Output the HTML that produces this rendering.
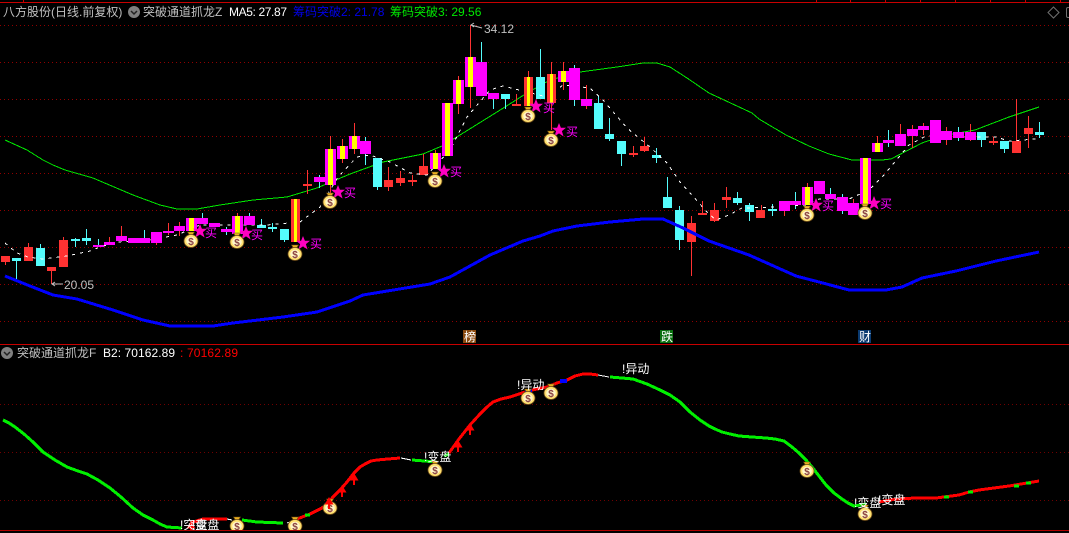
<!DOCTYPE html>
<html><head><meta charset="utf-8"><style>
html,body{margin:0;padding:0;background:#000;width:1069px;height:533px;overflow:hidden}
svg{display:block}
text{font-family:"Liberation Sans","WenQuanYi Zen Hei","Noto Sans CJK SC",sans-serif;font-size:12px}
.c{shape-rendering:crispEdges}
</style></head><body>
<svg width="1069" height="533" viewBox="0 0 1069 533" xmlns="http://www.w3.org/2000/svg">
<defs>
<g id="bag">
<path d="M-3.5-8H3.5L1.5-5H-1.5Z" fill="#eab020" stroke="#6a4a10" stroke-width=".6"/>
<ellipse cx="0" cy="1" rx="7" ry="6.5" fill="#ffe070" stroke="#6b4a18" stroke-width=".8"/>
<ellipse cx="0" cy="1" rx="4.8" ry="4.3" fill="#fff6c8"/>
<text x="0" y="5" text-anchor="middle" style="font-size:10px;font-weight:bold" fill="#8a4040">$</text>
</g>
<clipPath id="low"><rect x="0" y="345" width="1069" height="185"/></clipPath>
<polygon id="star" points="0,-7 1.9,-2.3 7,-2.3 2.9,1.1 4.6,6.5 0,3.4 -4.6,6.5 -2.9,1.1 -7,-2.3 -1.9,-2.3" fill="#ff00c0"/>
<g id="up"><path d="M0-6L4.5 1.5H1V6H-1V1.5H-4.5Z" fill="#f00"/></g>
</defs>
<rect width="1069" height="533" fill="#000"/>
<g class="c">
<path d="M0 25.5H1069M0 62.5H1069M0 99.5H1069M0 136.5H1069M0 173.5H1069M0 210.5H1069M0 247.5H1069M0 284.5H1069M0 321.5H1069" stroke="#900000" stroke-width="1" stroke-dasharray="1 3" fill="none"/>
<path d="M0 404.5H1069M0 452.5H1069M0 500.5H1069" stroke="#700000" stroke-width="1" stroke-dasharray="1 3" fill="none"/>
<path d="M0 2.5H1069M0 344.5H1069" stroke="#c80000" fill="none"/>
<path d="M0 530.5H1069" stroke="#b00000" fill="none"/>
<path d="M23.5 0V2M816.5 0V2M850.5 0V2M885.5 0V2M920.5 0V2M955.5 0V2M990.5 0V2M1025.5 0V2M1060.5 0V2" stroke="#c80000" fill="none"/>
<!-- green MA -->
<polyline fill="none" stroke="#00e800" stroke-width="1" points="5,140 27,150 43,160 53,165 65,170 93,178 100,181 133,195 160,205 177,209 197,209 220,205 253,200 287,197 317,188 350,174 383,162 423,154 442,146 460,135 505,107 527,93 550,80 580,72 617,67 643,63 657,63 670,67 687,78 709,93 752,113 759,119 786,135 809,146 829,154 852,160 882,160 891,159 922,143 942,136 975,130 1009,117 1039,107"/>
<!-- wicks -->
<path fill="none" stroke="#ff3232" d="M5.5 256V265M28.5 243V247M51.5 271V284M63.5 237V240M109.5 237V242M121.5 226V236M168.5 223V235M179.5 222V236M307.5 170V194M330.5 136V194M342.5 139V163M354.5 123V154M388.5 167V191M400.5 171V186M412.5 175V186M423.5 154V175M435.5 150V153M458.5 76V114M470.5 25V108M516.5 94V105M528.5 71V77M551.5 62V130M563.5 62V90M586.5 85V109M633.5 146V157M644.5 137V152M691.5 216V276M702.5 201V215M714.5 203V222M726.5 187V208M761.5 205V210M784.5 211V216M807.5 183V187M853.5 199V203M877.5 136V143M900.5 124V134M912.5 125V148M923.5 123V135M946.5 127V145M970.5 124V141M993.5 137V145M1016.5 99V141M1028.5 116V148M156.5 243V245M237.5 213V216"/>
<path fill="none" stroke="#54fcfc" d="M16.5 258V279M40.5 244V248M75.5 238V247M86.5 229V245M98.5 239V247M144.5 230V238M202.5 213V218M226.5 227V235M249.5 213V216M261.5 219V228M272.5 223V232M284.5 240V242M319.5 175V188M365.5 137V165M377.5 187V190M481.5 42V62M493.5 99V109M505.5 99V109M540.5 49V77M574.5 65V106M598.5 96V103M609.5 118V141M621.5 154V166M656.5 148V163M667.5 177V197M679.5 206V250M737.5 192V205M749.5 203V221M772.5 204V216M795.5 192V209M830.5 188V194M842.5 194V214M888.5 130V147M958.5 127V141M981.5 140V147M1004.5 149V153M1039.5 122V138"/>
<!-- red bodies -->
<path fill="#ff3232" d="M1 256H10V262H1ZM24 247H33V261H24ZM47 267H56V271H47ZM59 240H68V267H59ZM303 184H312V186H303ZM384 180H393V187H384ZM396 178H405V183H396ZM408 180H417V182H408ZM419 166H428V175H419ZM512 104H521V106H512ZM629 153H638V155H629ZM640 146H649V151H640ZM687 223H696V242H687ZM698 213H707V215H698ZM710 210H719V221H710ZM722 197H731V200H722ZM756 210H765V218H756ZM989 141H998V143H989ZM1012 141H1021V153H1012ZM1024 128H1033V134H1024Z"/>
<!-- cyan bodies -->
<path fill="#54fcfc" d="M12 258H21V261H12ZM36 248H45V266H36ZM71 239H80V241H71ZM82 238H91V241H82ZM257 225H266V228H257ZM268 227H277V229H268ZM280 229H289V240H280ZM373 158H382V187H373ZM501 94H510V99H501ZM536 77H545V99H536ZM594 103H603V129H594ZM605 134H614V139H605ZM617 141H626V154H617ZM652 155H661V158H652ZM663 197H672V208H663ZM675 210H684V240H675ZM733 198H742V203H733ZM745 205H754V212H745ZM768 209H777V211H768ZM977 132H986V140H977ZM1000 141H1009V149H1000ZM1035 132H1044V135H1035Z"/>
<!-- blue -->
<polyline fill="none" stroke="#0000ff" stroke-width="3" points="5,276 30,286 53,295 77,299 113,310 143,320 170,326 213,326 233,323 283,317 317,312 350,301 363,295 430,284 450,277 490,255 523,241 540,236 553,231 577,226 610,222 643,219 663,219 683,228 709,241 749,255 796,276 819,282 849,290 886,290 902,287 922,278 956,271 996,261 1039,252"/>
<!-- white dashed -->
<polyline fill="none" stroke="#fff" stroke-width="1" stroke-dasharray="3 5" points="5,243 17,253 28,257 43,259 67,256 90,251 100,247 117,242 150,240 177,235 200,225 230,225 267,225 300,222 320,207 338,177 357,157 370,155 390,162 410,173 427,175 450,150 467,117 490,90 503,86 527,92 547,97 563,85 590,88 603,100 627,128 650,147 667,163 680,182 708,213 716,220 729,215 742,208 776,207 806,205 819,199 849,199 869,190 884,175 909,145 926,136 959,137 996,137 1009,141 1036,139"/>
<!-- magenta bodies -->
<path fill="#ff00ff" d="M93 245H104V247H93ZM104 242H115V245H104ZM116 236H127V241H116ZM128 238H139V243H128ZM139 238H150V243H139ZM151 232H162V243H151ZM163 231H174V233H163ZM174 226H185V231H174ZM186 218H197V231H186ZM197 218H208V224H197ZM209 223H220V227H209ZM221 229H232V232H221ZM232 216H243V234H232ZM244 216H255V225H244ZM314 177H325V182H314ZM325 149H336V185H325ZM337 146H348V159H337ZM349 136H360V149H349ZM360 141H371V154H360ZM430 153H441V169H430ZM442 103H453V156H442ZM453 80H464V104H453ZM465 57H476V87H465ZM476 62H487V96H476ZM488 93H499V99H488ZM558 71H569V82H558ZM569 68H580V100H569ZM581 99H592V106H581ZM779 201H790V211H779ZM790 201H801V205H790ZM802 187H813V205H802ZM814 181H825V194H814ZM825 194H836V199H825ZM837 197H848V211H837ZM848 203H859V215H848ZM860 158H871V204H860ZM872 143H883V152H872ZM883 140H894V143H883ZM895 134H906V146H895ZM907 129H918V136H907ZM918 126H929V130H918ZM930 120H941V143H930ZM941 131H952V140H941ZM953 132H964V138H953ZM965 132H976V140H965Z"/>
<!-- red/yellow/red -->
<path fill="#ff3232" d="M291 199H300V242H291ZM524 77H533V106H524ZM547 74H556V103H547Z"/>
<path fill="#ffff00" d="M294 199H297V242H294ZM527 77H530V106H527ZM550 74H553V103H550ZM189 218H194V231H189ZM235 216H240V234H235ZM328 149H333V185H328ZM340 146H345V159H340ZM352 136H357V149H352ZM433 153H438V169H433ZM445 103H450V156H445ZM456 80H461V104H456ZM468 57H473V87H468ZM561 71H566V82H561ZM805 187H810V205H805ZM863 158H868V204H863ZM875 143H880V152H875Z"/>
</g>
<!-- stars and 买 -->
<g fill="#ff00ff">
<use href="#star" x="200" y="231"/><text x="205" y="237">买</text>
<use href="#star" x="246" y="233"/><text x="251" y="239">买</text>
<use href="#star" x="303" y="243"/><text x="310" y="248">买</text>
<use href="#star" x="338" y="192"/><text x="344" y="197">买</text>
<use href="#star" x="444" y="171"/><text x="450" y="176">买</text>
<use href="#star" x="536" y="106"/><text x="543" y="112">买</text>
<use href="#star" x="559" y="130"/><text x="566" y="136">买</text>
<use href="#star" x="816" y="205"/><text x="822" y="210">买</text>
<use href="#star" x="874" y="203"/><text x="880" y="208">买</text>
</g>
<!-- bags upper -->
<use href="#bag" x="191" y="240"/><use href="#bag" x="237" y="241"/><use href="#bag" x="295" y="253"/><use href="#bag" x="330" y="201"/><use href="#bag" x="435" y="180"/><use href="#bag" x="528" y="115"/><use href="#bag" x="551" y="139"/><use href="#bag" x="807" y="214"/><use href="#bag" x="865" y="212"/>
<!-- price labels -->
<path d="M63 284H52M55 282L52 284L55 286" stroke="#c0c0c0" fill="none" stroke-width="1"/>
<text x="64" y="289" fill="#c0c0c0">20.05</text>
<path d="M482 28L471 25M474 23L471 25L474 27" stroke="#c0c0c0" fill="none" stroke-width="1"/>
<text x="484" y="33" fill="#c0c0c0">34.12</text>
<!-- badges -->
<g class="c"><rect x="463" y="330" width="13" height="13" fill="#8a4a10"/><rect x="660" y="330" width="13" height="13" fill="#0a7010"/><rect x="858" y="330" width="13" height="13" fill="#0a3a70"/></g>
<text x="464" y="341" fill="#fff">榜</text><text x="661" y="341" fill="#fff">跌</text><text x="859" y="341" fill="#fff">财</text>
<!-- header -->
<text x="3" y="16" fill="#c0c0c0">八方股份(日线.前复权)</text>
<circle cx="134" cy="12" r="6" fill="#808080"/><path d="M131 11L134 14L137 11" stroke="#222" stroke-width="1.5" fill="none"/>
<text x="143" y="16" fill="#c0c0c0">突破通道抓龙Z</text>
<text x="229" y="16" fill="#fff" textLength="58">MA5: 27.87</text>
<text x="293" y="16" fill="#0000e8">筹码突破2: 21.78</text>
<text x="390" y="16" fill="#00e800">筹码突破3: 29.56</text>
<path d="M1053.5 7L1059 12.5L1053.5 18L1048 12.5Z" fill="none" stroke="#707070"/>
<rect x="1066.5" y="7.5" width="6" height="10" rx="1.5" fill="none" stroke="#707070"/>
<!-- lower title -->
<circle cx="7" cy="353" r="6" fill="#808080"/><path d="M4 352L7 355L10 352" stroke="#222" stroke-width="1.5" fill="none"/>
<text x="17" y="357" fill="#c0c0c0">突破通道抓龙F</text>
<text x="103" y="357" fill="#fff" textLength="72">B2: 70162.89</text>
<text x="180" y="357" fill="#f00" textLength="58">: 70162.89</text>
<!-- lower line -->
<g fill="none" stroke-width="3" clip-path="url(#low)" class="c">
<polyline stroke="#00f000" points="3,420 9,423 15,427 24,434 33,442 43,452 55,460 67,467 78,471 87,474 98,480 110,488 121,497 133,508 143,515 153,520 160,524 167,527 182,528"/>
<polyline stroke="#f00" points="190,523 203,519 227,519"/>
<polyline stroke="#fff" stroke-width="1" points="227,519 232,520"/>
<polyline stroke="#00f000" points="242,520 257,522 283,523"/>
<polyline stroke="#fff" stroke-width="1" points="287,523 292,521"/>
<polyline stroke="#f00" points="297,519 310,514 322,508 328,503 333,497 340,490 347,482 354,473 360,467 365,464 371,461 377,460 388,459 400,458"/>
<polyline stroke="#fff" stroke-width="1" points="401,458 411,460"/>
<polyline stroke="#00f000" points="412,460 437,462"/>
<polyline stroke="#00f000" points="444,456 449,454"/>
<polyline stroke="#f00" points="449,453 459,439 470,425 480,414 487,407 493,402 501,399 510,397 525,392"/>
<polyline stroke="#f00" points="532,390 547,387 557,383 567,380 575,376 583,374 590,374 598,375"/>
<polyline stroke="#fff" stroke-width="1" points="598,375 609,377"/>
<polyline stroke="#00f000" points="610,377 622,378 633,379 647,384 660,390 670,395 680,402 690,412 700,420 709,426 715,429 722,432 730,434 739,436 752,437 766,438 775,439 784,441 792,447 799,453 806,460 812,467 819,476 826,485 834,493 842,499 848,503 854,506 860,505 866,504"/>
<polyline stroke="#f00" points="879,502 896,499 916,498 936,498 959,495 969,492 979,490 994,488 1009,486 1039,481"/>
<path stroke="#0000ff" stroke-width="4" d="M525 391H532M560 381H567"/>
<path stroke="#00f000" stroke-width="3" d="M944 497H949M968 492H973M1014 486H1019M1026 483H1031M305 515H310"/>
</g>
<g clip-path="url(#low)">
<use href="#up" x="191" y="527"/>
<use href="#bag" x="237" y="525"/><use href="#bag" x="295" y="525"/><use href="#bag" x="330" y="507"/><use href="#bag" x="435" y="469"/><use href="#bag" x="528" y="397"/><use href="#bag" x="551" y="392"/><use href="#bag" x="807" y="470"/><use href="#bag" x="865" y="513"/>
<use href="#up" x="329" y="503"/><use href="#up" x="342" y="491"/><use href="#up" x="354" y="479"/><use href="#up" x="458" y="446"/><use href="#up" x="470" y="429"/>
<g fill="#fff">
<text x="180" y="529">!突盘</text><text x="192" y="529">!变盘</text>
<text x="424" y="461">!变盘</text>
<text x="517" y="389">!异动</text>
<text x="622" y="373">!异动</text>
<text x="854" y="507">!变盘</text>
<text x="878" y="504">!变盘</text>
</g>
</g>
</svg>
</body></html>
